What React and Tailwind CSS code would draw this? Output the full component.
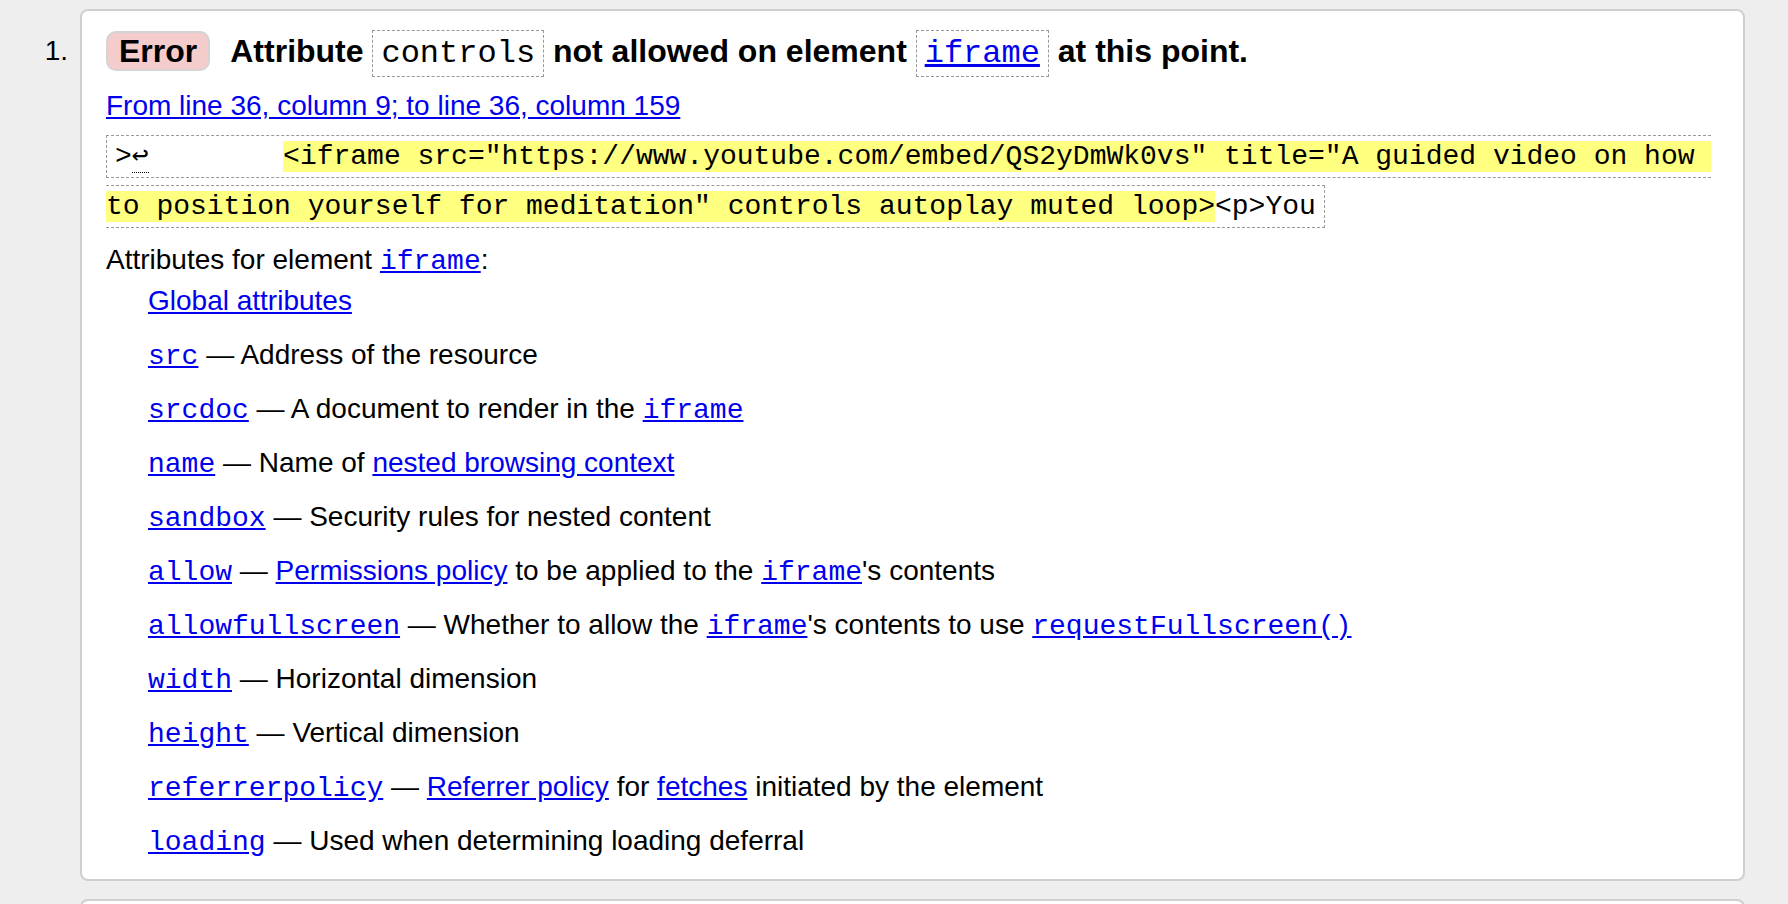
const SANS = "font-['Liberation_Sans',Arial,Helvetica,sans-serif]"
const MONO = "font-['Liberation_Mono','Courier_New',monospace]"

const ITEMS = [
  { code: 'src', rest: [' — Address of the resource'] },
  { code: 'srcdoc', rest: [' — A document to render in the ', { code: 'iframe' }] },
  { code: 'name', rest: [' — Name of ', { link: 'nested browsing context' }] },
  { code: 'sandbox', rest: [' — Security rules for nested content'] },
  {
    code: 'allow',
    rest: [' — ', { link: 'Permissions policy' }, ' to be applied to the ', { code: 'iframe' }, "'s contents"],
  },
  {
    code: 'allowfullscreen',
    rest: [' — Whether to allow the ', { code: 'iframe' }, "'s contents to use ", { code: 'requestFullscreen()' }],
  },
  { code: 'width', rest: [' — Horizontal dimension'] },
  { code: 'height', rest: [' — Vertical dimension'] },
  {
    code: 'referrerpolicy',
    rest: [' — ', { link: 'Referrer policy' }, ' for ', { link: 'fetches' }, ' initiated by the element'],
  },
  { code: 'loading', rest: [' — Used when determining loading deferral'] },
]

function CodeLink({ children }) {
  return <a className={`${MONO} leading-none text-[#0000ee] underline`}>{children}</a>
}

function TextLink({ children }) {
  return <a className="text-[#0000ee] underline">{children}</a>
}

function Part({ p }) {
  if (typeof p === 'string') return <>{p}</>
  if (p.code) return <CodeLink>{p.code}</CodeLink>
  return <TextLink>{p.link}</TextLink>
}

function Boxed({ children }) {
  return (
    <code className={`${MONO} font-normal border border-dashed border-[#999] px-[8px] py-[4px]`}>
      {children}
    </code>
  )
}

export default function App() {
  return (
    <div className={`h-[904px] overflow-hidden bg-[#eeeeee] text-black ${SANS}`}>
      <ol className="pt-[9px] pr-[43px]">
        <li className="flex">
          <div className="w-[80px] shrink-0 pt-[16px] pr-[12px] text-right text-[28px] leading-[52px]">1.</div>

          <div className="flex-1 rounded-lg border-2 border-[#cfcfcf] bg-white pl-[24px] pr-[24px] pt-[14px] pb-[20px]">
            {/* Message */}
            <p className="text-[32px] font-bold leading-[52px]">
              <span className="mr-[20px] inline-block rounded-[10px] border-2 border-[#d4d4d4] bg-[#f4cccc] px-[11px] leading-[36px]">
                Error
              </span>
              Attribute <Boxed>controls</Boxed> not allowed on element{' '}
              <Boxed>
                <a className="text-[#0000ee] underline">iframe</a>
              </Boxed>{' '}
              at this point.
            </p>

            <p className="mt-[8px] text-[28px] leading-[36px]">
              <TextLink>From line 36, column 9; to line 36, column 159</TextLink>
            </p>

            {/* Extract */}
            <p className={`mt-[8px] text-[28px] leading-[50px] ${MONO}`}>
              <code className="whitespace-pre border border-dashed border-[#999] px-[8px] py-[5px]">
                {'>'}
                <span className="border-b border-dotted border-black">↩</span>
                {'        '}
                <b className="bg-[#ffff80] font-normal">
                  {'<iframe src="https://www.youtube.com/embed/QS2yDmWk0vs" title="A guided video on how '}
                  <br />
                  {'to position yourself for meditation" controls autoplay muted loop>'}
                </b>
                {'<p>You'}
              </code>
            </p>

            {/* Elaboration */}
            <div className="mt-[10px] text-[28px] leading-[36px]">
              <p>
                Attributes for element <CodeLink>iframe</CodeLink>:
              </p>
              <div className="pl-[42px]">
                <p className="mt-[5px]">
                  <TextLink>Global attributes</TextLink>
                </p>
                {ITEMS.map((it) => (
                  <p key={it.code} className="mt-[18px]">
                    <CodeLink>{it.code}</CodeLink>
                    {it.rest.map((p, i) => (
                      <Part key={i} p={p} />
                    ))}
                  </p>
                ))}
              </div>
            </div>
          </div>
        </li>

        {/* next message, only its top edge is in view */}
        <li className="mt-[18px] flex">
          <div className="w-[80px] shrink-0" />
          <div className="h-[200px] flex-1 rounded-lg border-2 border-[#cfcfcf] bg-white" />
        </li>
      </ol>
    </div>
  )
}
